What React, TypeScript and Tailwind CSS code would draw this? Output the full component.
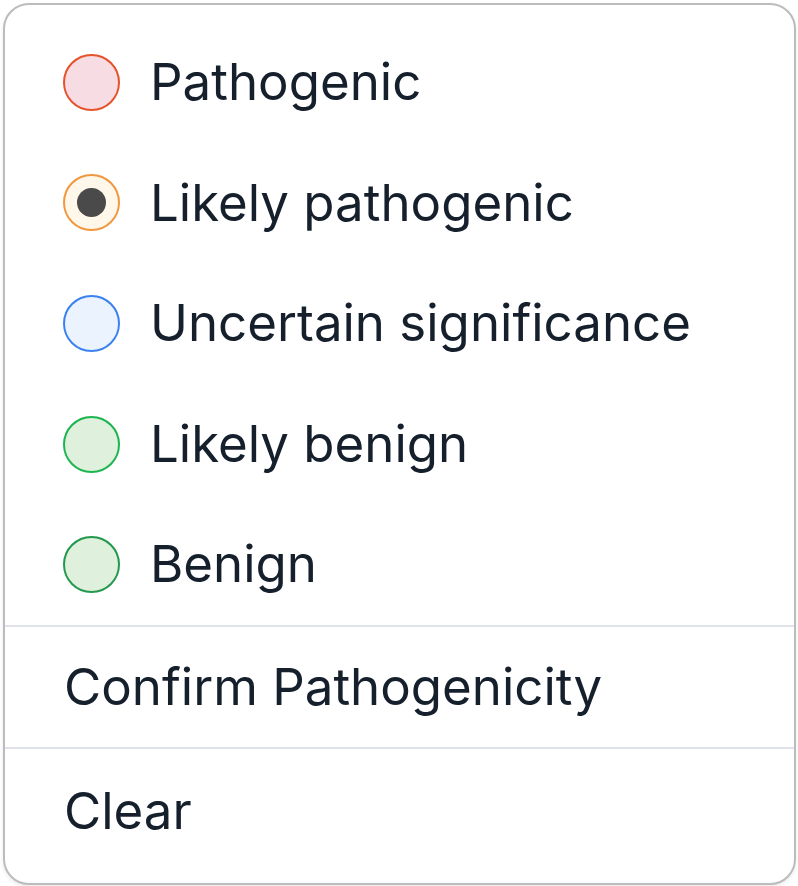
const options = [
  { label: "Pathogenic", ring: "border-[#e5532b] bg-[#f8dce3]", dot: false },
  { label: "Likely pathogenic", ring: "border-[#f0973f] bg-[#fff8ea]", dot: true },
  { label: "Uncertain significance", ring: "border-[#3b82f0] bg-[#ebf3fe]", dot: false },
  { label: "Likely benign", ring: "border-[#1cb54f] bg-[#dff0dd]", dot: false },
  { label: "Benign", ring: "border-[#22994d] bg-[#dff0dd]", dot: false },
];

function Option({ label, ring, dot }: { label: string; ring: string; dot: boolean }) {
  return (
    <div className="flex h-[120.6px] items-center gap-[30px] pl-[58px]">
      <span
        className={`flex h-[57px] w-[57px] shrink-0 items-center justify-center rounded-full border-[2.5px] ${ring}`}
      >
        {dot && <span className="h-[29px] w-[29px] rounded-full bg-[#4a4a4a]" />}
      </span>
      <span>{label}</span>
    </div>
  );
}

export default function App() {
  return (
    <div
      className="h-[886px] w-[798px] bg-white p-[3px] text-[51px] text-[#16202c]"
      style={{ fontFamily: "Inter, 'Noto Sans', sans-serif" }}
    >
      <div className="flex h-[882px] w-[793px] flex-col overflow-hidden rounded-[26px] border-[2.5px] border-[#bcbcbc] bg-white shadow-[0_2px_4px_rgba(0,0,0,0.08)]">
        <div className="pt-[17px]">
          {options.map((o) => (
            <Option key={o.label} {...o} />
          ))}
        </div>
        <div className="h-[2px] bg-[#dfe2e8]" />
        <div className="flex h-[120px] items-center pl-[59px]">Confirm Pathogenicity</div>
        <div className="h-[2px] bg-[#dfe2e8]" />
        <div className="flex h-[124px] items-center pl-[59px]">Clear</div>
      </div>
    </div>
  );
}
